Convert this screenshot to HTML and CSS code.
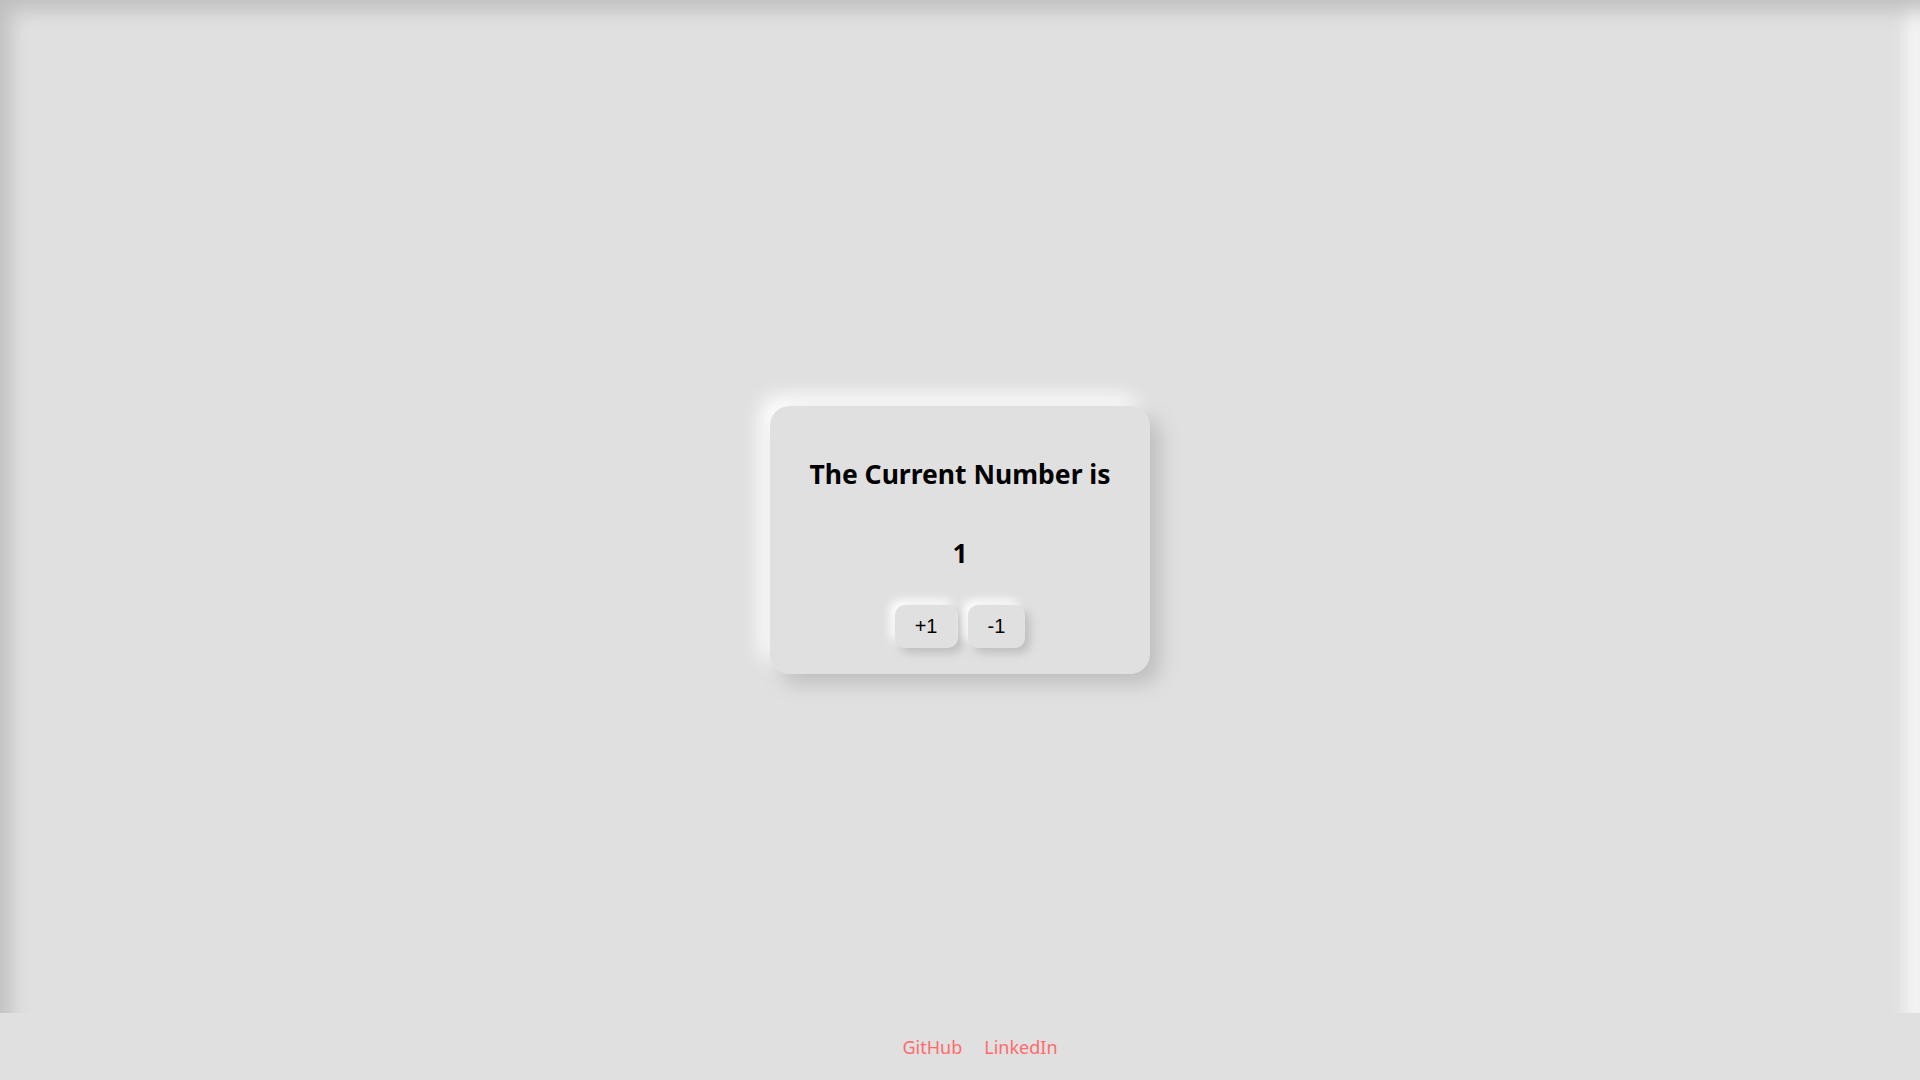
FILE: index.html
```html
<!DOCTYPE html>
<html lang="en">
<head>
<meta charset="utf-8">
<title>Counter</title>
<link rel="stylesheet" href="styles.css">
</head>
<body>
<main class="stage">
  <section class="card">
    <h1 class="title">The Current Number is</h1>
    <div class="number">1</div>
    <div class="actions">
      <button class="btn">+1</button>
      <button class="btn">-1</button>
    </div>
  </section>
</main>
<footer class="footer">
  <a class="link" href="#">GitHub</a>
  <a class="link" href="#">LinkedIn</a>
</footer>
</body>
</html>
```
FILE: styles.css
```css
* { box-sizing: border-box; }
html, body { margin: 0; padding: 0; }
body {
  background: #e0e0e0;
  font-family: "Noto Sans", "Open Sans", sans-serif;
  color: #000;
  height: 1080px;
  overflow: hidden;
}
.stage {
  height: 1080px;
  display: flex;
  align-items: center;
  justify-content: center;
  background: #e0e0e0;
  box-shadow: inset 10px 10px 20px #bebebe, inset -10px -10px 20px #ffffff;
}
.card {
  width: 380px;
  height: 268px;
  border-radius: 20px;
  background: #e0e0e0;
  box-shadow: 10px 10px 20px #bebebe, -10px -10px 20px #ffffff;
  display: flex;
  flex-direction: column;
  align-items: center;
  padding-top: 48px;
}
.title {
  margin: 0;
  font-size: 26.5px;
  font-weight: 700;
  line-height: 40px;
}
.number {
  margin-top: 39px;
  font-size: 26.5px;
  font-weight: 700;
  line-height: 40px;
}
.actions {
  margin-top: 32px;
  display: flex;
  gap: 10px;
}
.btn {
  font-family: "Liberation Sans", Arial, sans-serif;
  font-size: 20px;
  line-height: 23px;
  padding: 10px 20px;
  border: none;
  border-radius: 10px;
  background: #e0e0e0;
  color: #000;
  box-shadow: 5px 5px 10px #bebebe, -5px -5px 10px #ffffff;
}
.footer {
  position: fixed;
  left: 0;
  right: 0;
  bottom: 0;
  height: 67px;
  background: #e0e0e0;
  display: flex;
  justify-content: center;
  align-items: center;
  gap: 22px;
  padding-left: 40px;
}
.link {
  color: #ff6b6b;
  text-decoration: none;
  font-size: 18px;
}
```
